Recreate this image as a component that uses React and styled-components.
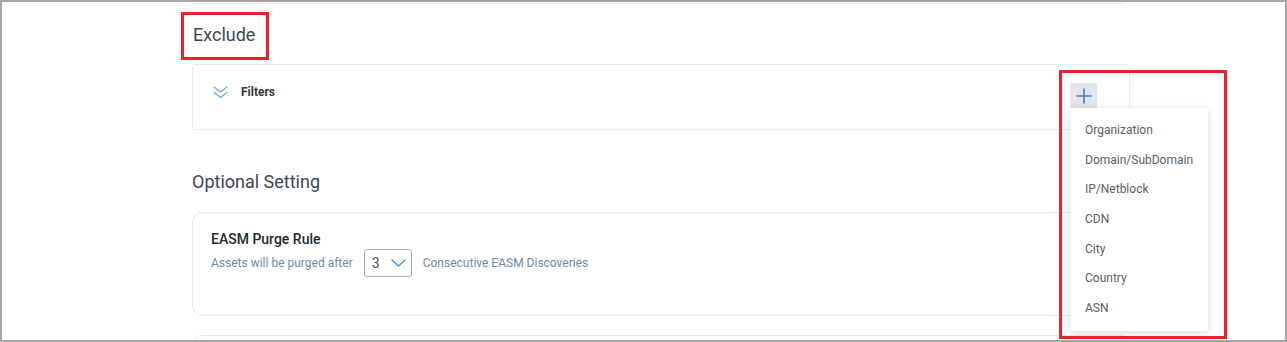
import React from 'react';
import styled, { createGlobalStyle } from 'styled-components';

const GlobalStyle = createGlobalStyle`
  html, body {
    margin: 0;
    padding: 0;
    background: #ffffff;
    font-family: Roboto, "Liberation Sans", Arial, sans-serif;
  }
  * {
    box-sizing: border-box;
  }
`;

const Frame = styled.div`
  width: 1287px;
  height: 342px;
  border: 2px solid #a5a5a5;
  background: #ffffff;
  overflow: hidden;
`;

const Column = styled.div`
  display: flex;
  flex-direction: column;
  width: 938px;
  margin-left: 190px;
`;

// bottom edge of the card scrolled out above
const CardStub = styled.div`
  height: 2px;
  margin: 0 5px 0 1px;
  border: 1px solid #e9ecef;
  border-top: none;
  border-radius: 0 0 6px 6px;
`;

const Highlight = styled.div`
  align-self: flex-start;
  margin: 8px 0 0 -11px;
  padding: 8px 11px 10px 9px;
  border: 3px solid #e8212c;
`;

const SectionTitle = styled.h2`
  margin: ${(p) => p.$top || 0}px 0 0;
  font-size: 18px;
  line-height: 24px;
  font-weight: 400;
  color: #3e4853;
`;

const Card = styled.div`
  height: ${(p) => p.$height}px;
  margin-top: ${(p) => p.$top}px;
  border: 1px solid #e8ebee;
  border-radius: ${(p) => p.$radius || 4}px;
  background: #ffffff;
`;

const FilterCard = styled(Card)`
  display: flex;
  justify-content: space-between;
  align-items: flex-start;
  padding: 18px 32px 0 20px;
`;

const FilterToggle = styled.div`
  display: flex;
  align-items: center;
  gap: 13px;
  height: 12px;
  margin-top: 3px;
`;

const FilterLabel = styled.span`
  font-size: 12px;
  font-weight: 700;
  color: #34383d;
`;

const AddWrap = styled.div`
  position: relative;
  width: 27px;
  height: 25px;
`;

const AddButton = styled.div`
  width: 27px;
  height: 25px;
  display: flex;
  align-items: center;
  justify-content: center;
  background: #e2e6ea;
`;

const Menu = styled.ul`
  position: absolute;
  top: 25px;
  left: 0;
  width: 138px;
  margin: 0;
  padding: 8px 0 7px;
  list-style: none;
  background: #ffffff;
  border-radius: 4px;
  box-shadow: 0 2px 8px rgba(40, 50, 70, 0.18);
  z-index: 2;
`;

const MenuItem = styled.li`
  height: 29.7px;
  line-height: 29.7px;
  padding-left: 15px;
  font-size: 12px;
  color: #5b6067;
  white-space: nowrap;
`;

// red annotation drawn over the add button and its menu
const Annotation = styled.div`
  position: absolute;
  left: -11px;
  top: -13px;
  width: 168px;
  height: 269px;
  border: 3px solid #e8212c;
  z-index: 3;
  pointer-events: none;
`;

const SettingCard = styled(Card)`
  padding: 16px 18px 0;
`;

const RuleTitle = styled.div`
  font-size: 14px;
  line-height: 20px;
  font-weight: 500;
  color: #25282c;
`;

const RuleRow = styled.div`
  display: flex;
  align-items: center;
  gap: 11px;
  font-size: 12px;
  color: #6f8ba2;
`;

const CountSelect = styled.div`
  display: flex;
  align-items: center;
  justify-content: space-between;
  width: 48px;
  height: 28px;
  padding: 0 5px 0 7px;
  border: 1px solid #a3adb8;
  border-radius: 3px;
  font-size: 14px;
  color: #4a4f55;
`;

const ChevronsDown = () => (
  <svg width="15" height="13" viewBox="0 0 15 13" fill="none" stroke="#6ea5e2" strokeWidth="1.3" strokeLinecap="round" strokeLinejoin="round">
    <path d="M1 1 L7.5 6 L14 1" />
    <path d="M1 6.5 L7.5 11.5 L14 6.5" />
  </svg>
);

const Plus = () => (
  <svg width="16" height="16" viewBox="0 0 16 16" fill="none" stroke="#3e80d2" strokeWidth="1.6" strokeLinecap="round">
    <path d="M8 1 V15" />
    <path d="M1 8 H15" />
  </svg>
);

const ChevronDown = () => (
  <svg width="15" height="8" viewBox="0 0 15 8" fill="none" stroke="#4b8bd6" strokeWidth="1.4" strokeLinecap="round" strokeLinejoin="round">
    <path d="M1 1 L7.5 7 L14 1" />
  </svg>
);

const filterOptions = ['Organization', 'Domain/SubDomain', 'IP/Netblock', 'CDN', 'City', 'Country', 'ASN'];

export default function App() {
  return (
    <>
      <GlobalStyle />
      <Frame>
        <Column>
          <CardStub />
          <Highlight>
            <SectionTitle>Exclude</SectionTitle>
          </Highlight>
          <FilterCard $height={66} $top={4}>
            <FilterToggle>
              <ChevronsDown />
              <FilterLabel>Filters</FilterLabel>
            </FilterToggle>
            <AddWrap>
              <AddButton>
                <Plus />
              </AddButton>
              <Menu>
                {filterOptions.map((opt) => (
                  <MenuItem key={opt}>{opt}</MenuItem>
                ))}
              </Menu>
              <Annotation />
            </AddWrap>
          </FilterCard>

          <SectionTitle $top={40}>Optional Setting</SectionTitle>
          <SettingCard $height={104} $top={18} $radius={10}>
            <RuleTitle>EASM Purge Rule</RuleTitle>
            <RuleRow>
              <span>Assets will be purged after</span>
              <CountSelect>
                <span>3</span>
                <ChevronDown />
              </CountSelect>
              <span>Consecutive EASM Discoveries</span>
            </RuleRow>
          </SettingCard>
          <SettingCard $height={60} $top={19} $radius={10} />
        </Column>
      </Frame>
    </>
  );
}
